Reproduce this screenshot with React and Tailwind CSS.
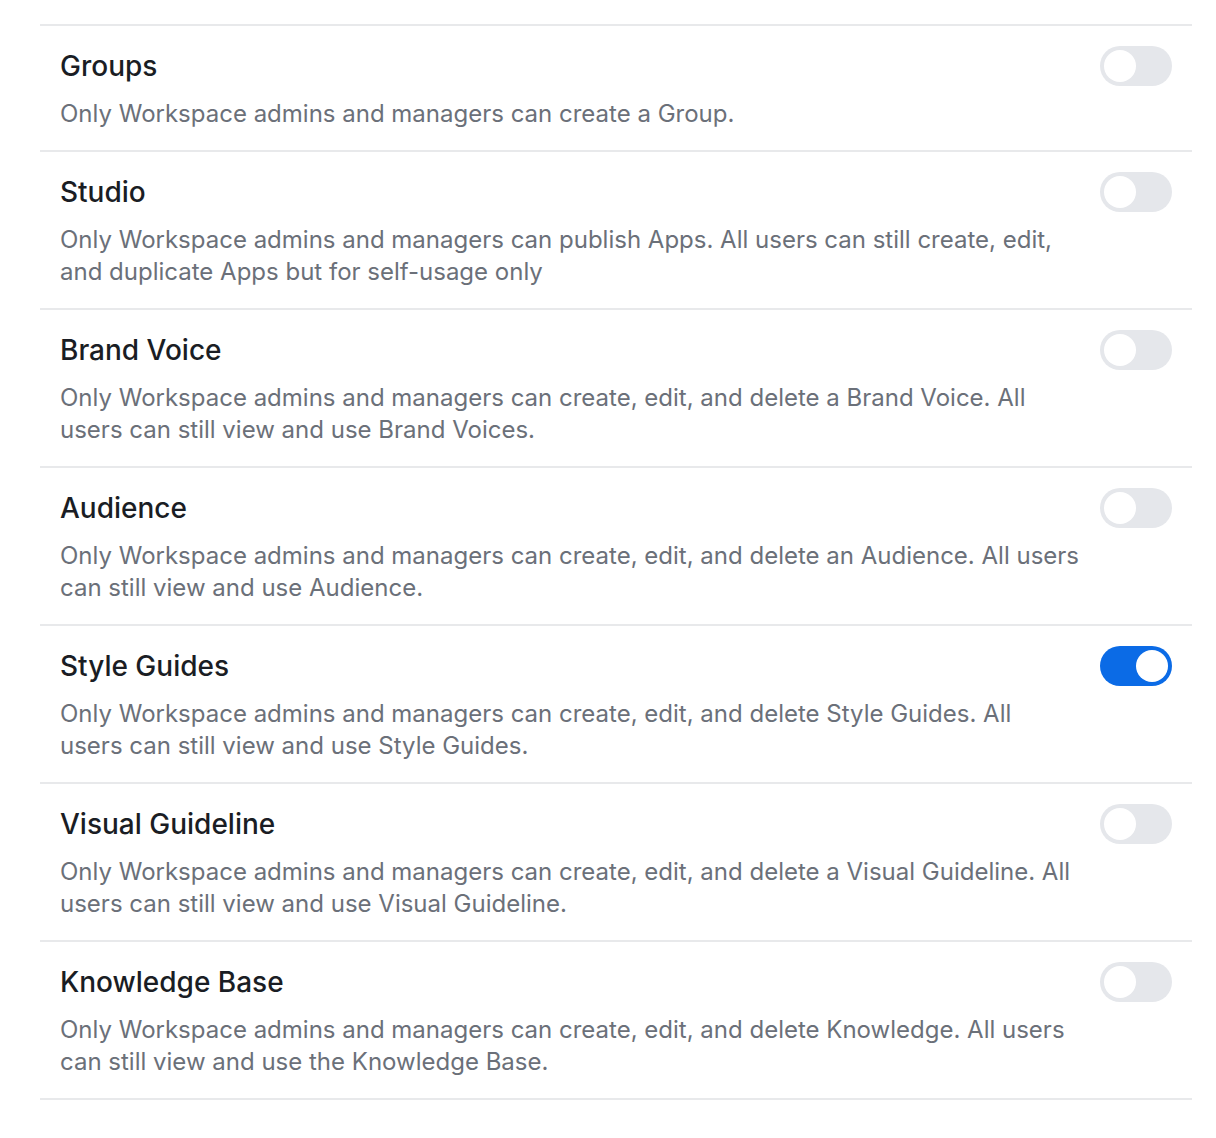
import React, { useState } from 'react';

const settings = [
  { title: 'Groups', desc: 'Only Workspace admins and managers can create a Group.', on: false },
  {
    title: 'Studio',
    desc: 'Only Workspace admins and managers can publish Apps. All users can still create, edit, and duplicate Apps but for self-usage only',
    on: false,
  },
  {
    title: 'Brand Voice',
    desc: 'Only Workspace admins and managers can create, edit, and delete a Brand Voice. All users can still view and use Brand Voices.',
    on: false,
  },
  {
    title: 'Audience',
    desc: 'Only Workspace admins and managers can create, edit, and delete an Audience. All users can still view and use Audience.',
    on: false,
  },
  {
    title: 'Style Guides',
    desc: 'Only Workspace admins and managers can create, edit, and delete Style Guides. All users can still view and use Style Guides.',
    on: true,
  },
  {
    title: 'Visual Guideline',
    desc: 'Only Workspace admins and managers can create, edit, and delete a Visual Guideline. All users can still view and use Visual Guideline.',
    on: false,
  },
  {
    title: 'Knowledge Base',
    desc: 'Only Workspace admins and managers can create, edit, and delete Knowledge. All users can still view and use the Knowledge Base.',
    on: false,
  },
];

const Toggle = ({ checked, onChange }) => (
  <button
    type="button"
    onClick={onChange}
    className={`flex-shrink-0 -mt-[2px] w-[72px] h-[40px] rounded-full p-[4px] flex items-center transition-colors ${
      checked ? 'bg-[#0b6be6] justify-end' : 'bg-[#e5e7eb] justify-start'
    }`}
  >
    <span className="block w-[32px] h-[32px] rounded-full bg-white" />
  </button>
);

export default function App() {
  const [items, setItems] = useState(settings);

  const toggle = (idx) => {
    setItems(items.map((it, i) => (i === idx ? { ...it, on: !it.on } : it)));
  };

  return (
    <div className="bg-white min-h-screen pt-[24px] pl-[40px] pr-[24px]" style={{ fontFamily: 'Inter, "Noto Sans", sans-serif' }}>
      <div className="border-t-2 border-[#e8e9eb]">
        {items.map((item, idx) => (
          <div key={item.title} className="flex items-start gap-[20px] pl-[20px] pr-[20px] pt-[22px] pb-[20px] border-b-2 border-[#e8e9eb]">
            <div className="flex-1 flex flex-col gap-[14px]">
              <div className="text-[28px] leading-[36px] font-medium text-[#1a1d24]">{item.title}</div>
              <div className="text-[24px] leading-[32px] text-[#6b7079]">{item.desc}</div>
            </div>
            <Toggle checked={item.on} onChange={() => toggle(idx)} />
          </div>
        ))}
      </div>
    </div>
  );
}
